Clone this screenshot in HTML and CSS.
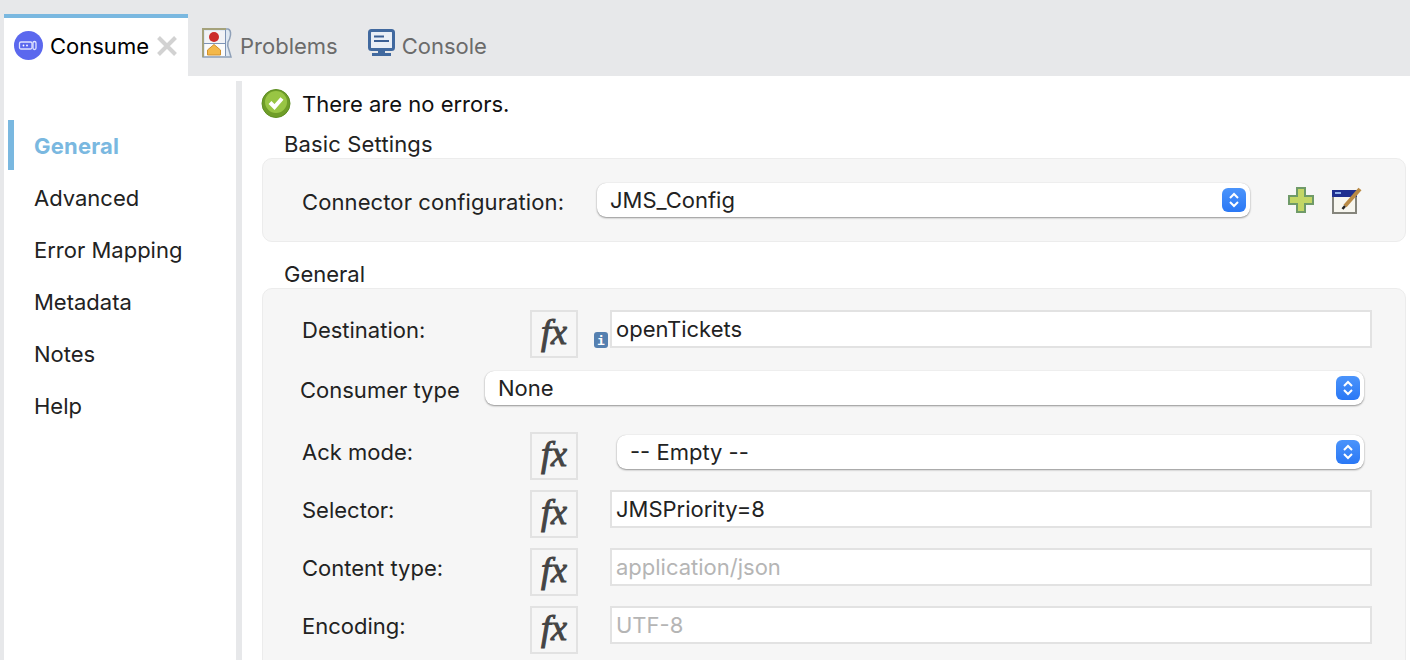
FILE: index.html
```html
<!DOCTYPE html>
<html lang="en">
  <head>
    <meta charset="UTF-8" />
    <title>Consume</title>
    <link rel="stylesheet" href="styles.css">
  </head>
  <body>
    <div class="tabbar">
      <div class="tab tab-active">
        <svg class="tab-icon" width="29" height="29" viewBox="0 0 29 29">
          <circle cx="14.5" cy="14.5" r="14.5" fill="#5b68ee"/>
          <rect x="5.500" y="11" width="12.500" height="7" rx="1.500" fill="none" stroke="#dfe2ff" stroke-width="1.300"/>
          <circle cx="9.500" cy="14.500" r="0.900" fill="#fff"/>
          <circle cx="13" cy="14.500" r="0.900" fill="#fff"/>
          <rect x="19" y="10.500" width="3" height="8" rx="1.500" fill="none" stroke="#dfe2ff" stroke-width="1.300"/>
        </svg>
        <span class="tab-label">Consume</span>
        <svg class="tab-close" width="20" height="20" viewBox="0 0 20 20">
          <path d="M1.500 1.500 18.500 18.500M18.500 1.500 1.500 18.500" stroke="#d2d2d2" stroke-width="4"/>
        </svg>
      </div>
      <div class="tab">
        <svg class="tab-icon-map" width="30" height="30" viewBox="0 0 30 30">
          <path d="M1 1H26Q29 2 28.500 7Q28 11 26 14Q25 18 27 22L29 29H1Z" fill="#dfe8f2" stroke="#8fa0b8" stroke-width="1.500"/>
          <path d="M1 29V1H24" fill="none" stroke="#a5a27c" stroke-width="2"/>
          <rect x="3" y="3" width="20" height="12" fill="#f2f3f6"/>
          <rect x="3" y="16" width="20" height="12" fill="#fbfbfb"/>
          <circle cx="12" cy="9" r="5" fill="#cc2b2b"/>
          <path d="M5.500 27V22L12 16.500 18.500 22V27Z" fill="#f3b84a" stroke="#d0902c"/>
          <path d="M2 15.500H24" stroke="#7d93b5"/>
          <path d="M23.500 2V28" stroke="#7d93b5"/>
        </svg>
        <span class="tab-label">Problems</span>
      </div>
      <div class="tab tab-console">
        <svg class="tab-icon-screen" width="27" height="27" viewBox="0 0 27 27">
          <rect x="1.500" y="1.500" width="24" height="19" rx="2" fill="#e9eef6" stroke="#41699f" stroke-width="3"/>
          <path d="M6 7.500H16M6 12H21" stroke="#3b5f94" stroke-width="2"/>
          <path d="M10 22H17V24H10Z" fill="#41699f"/>
          <rect x="4" y="24" width="19" height="3" fill="#41699f"/>
        </svg>
        <span class="tab-label">Console</span>
      </div>
    </div>

    <div class="main">
      <div class="sidebar">
        <div class="nav-item nav-active">General</div>
        <div class="nav-item">Advanced</div>
        <div class="nav-item">Error Mapping</div>
        <div class="nav-item">Metadata</div>
        <div class="nav-item">Notes</div>
        <div class="nav-item">Help</div>
      </div>
      <div class="splitter"></div>
      <div class="content">
        <div class="status">
          <svg width="30" height="30" viewBox="0 0 30 30">
            <circle cx="15" cy="15.500" r="14" fill="#6f9d28" stroke="#5e8f22" stroke-width="1"/>
            <circle cx="15" cy="14" r="11" fill="#98c544"/>
            <path d="M9 14.500 13.500 19 21 10.500" fill="none" stroke="#fff" stroke-width="4"/>
          </svg>
          <span class="status-text">There are no errors.</span>
        </div>

        <div class="section-title first">Basic Settings</div>
        <div class="panel panel-basic">
          <label class="field-label config-label">Connector configuration:</label>
          <div class="select config-select">
            <span>JMS_Config</span>
            <span class="stepper">
              <svg width="14" height="18" viewBox="0 0 14 18"><path d="M3 7 7 3 11 7M3 11 7 15 11 11" fill="none" stroke="#fff" stroke-width="2"/></svg>
            </span>
          </div>
          <svg class="config-add" width="26" height="26" viewBox="0 0 26 26">
            <path d="M9 1H17V9H25V17H17V25H9V17H1V9H9Z" fill="#c3d665" stroke="#6f9a68" stroke-width="2"/>
          </svg>
          <svg class="config-edit" width="30" height="28" viewBox="0 0 30 28">
            <rect x="1" y="5" width="23" height="22" fill="#f7f6ef" stroke="#85857c" stroke-width="2"/>
            <rect x="0" y="4" width="25" height="7" fill="#1f2f8f"/>
            <path d="M3 7H9" stroke="#8fb0ea" stroke-width="2"/>
            <path d="M13 20 28 3" stroke="#b98a45" stroke-width="4"/>
            <path d="M10.500 23 13 20" stroke="#222" stroke-width="2.500"/>
          </svg>
        </div>

        <div class="section-title">General</div>
        <div class="panel panel-general">
          <div class="row">
            <label class="field-label">Destination:</label>
            <div class="fx">fx</div>
            <div class="hint"><span class="info">i</span></div>
            <input class="text-input" type="text" value="openTickets" />
          </div>
          <div class="row-consumer">
            <label class="field-label consumer-label">Consumer type</label>
            <div class="select consumer-select">
              <span>None</span>
              <span class="stepper">
                <svg width="14" height="18" viewBox="0 0 14 18"><path d="M3 7 7 3 11 7M3 11 7 15 11 11" fill="none" stroke="#fff" stroke-width="2"/></svg>
              </span>
            </div>
          </div>
          <div class="row">
            <label class="field-label">Ack mode:</label>
            <div class="fx">fx</div>
            <div class="select ack-select">
              <span>-- Empty --</span>
              <span class="stepper">
                <svg width="14" height="18" viewBox="0 0 14 18"><path d="M3 7 7 3 11 7M3 11 7 15 11 11" fill="none" stroke="#fff" stroke-width="2"/></svg>
              </span>
            </div>
          </div>
          <div class="row">
            <label class="field-label">Selector:</label>
            <div class="fx">fx</div>
            <div class="hint"></div>
            <input class="text-input" type="text" value="JMSPriority=8" />
          </div>
          <div class="row">
            <label class="field-label">Content type:</label>
            <div class="fx">fx</div>
            <div class="hint"></div>
            <input class="text-input" type="text" placeholder="application/json" />
          </div>
          <div class="row">
            <label class="field-label">Encoding:</label>
            <div class="fx">fx</div>
            <div class="hint"></div>
            <input class="text-input" type="text" placeholder="UTF-8" />
          </div>
        </div>
      </div>
    </div>
  </body>
</html>
```
FILE: styles.css
```css
html,
body {
  margin: 0;
  height: 660px;
  overflow: hidden;
}
body {
  background-color: white;
  font-family: "Inter", "Liberation Sans", sans-serif;
  font-size: 22px;
  color: #222;
}
.tabbar {
  height: 76px;
  box-sizing: border-box;
  padding: 14px 0 0 4px;
  background-color: #e7e8ea;
  display: flex;
}
.tab {
  display: flex;
  align-items: center;
  gap: 8px;
  padding: 2px 14px 0;
  color: #6b6b6b;
}
.tab-icon-map {
  margin-bottom: 6px;
}
.tab-icon-screen {
  margin-bottom: 8px;
}
.tab-console {
  gap: 7px;
  padding-left: 16px;
}
.tab-active {
  width: 184px;
  box-sizing: border-box;
  gap: 7px;
  padding: 0 10px 2px;
  border-top: 4px solid #7ab8e0;
  background-color: white;
  color: #000;
}
.tab-icon {
  margin-bottom: 1px;
}
.tab-close {
  margin-left: 1px;
}
.main {
  display: flex;
  height: 584px;
  border-left: 4px solid #e7e8ea;
}
.sidebar {
  width: 232px;
  padding-top: 44px;
}
.nav-item {
  height: 52px;
  box-sizing: border-box;
  padding-left: 30px;
  line-height: 52px;
}
.nav-active {
  height: 50px;
  margin-left: 4px;
  margin-bottom: 2px;
  padding-left: 20px;
  border-left: 6px solid #7ab8e0;
  font-weight: 700;
  letter-spacing: 0.2px;
  color: #7ab8e0;
}
.splitter {
  width: 6px;
  margin-top: 5px;
  background-color: #e7e8ea;
}
.content {
  flex: 1;
  padding: 12px 4px 0 20px;
}
.status {
  display: flex;
  align-items: center;
  gap: 11px;
  height: 30px;
  margin-left: -1px;
  color: #111;
}
.status-text {
  padding-top: 2px;
}
.section-title {
  height: 28px;
  line-height: 28px;
  margin: 18px 0 0 22px;
}
.section-title.first {
  margin-top: 12px;
  letter-spacing: 0.15px;
}
.panel {
  box-sizing: border-box;
  border: 1px solid #ececec;
  border-radius: 10px;
  background-color: #f6f6f6;
}
.panel-basic {
  height: 84px;
  display: flex;
  align-items: center;
  padding-left: 39px;
}
.config-label {
  width: 295px;
  padding-top: 4px;
  letter-spacing: 0.1px;
}
.select {
  height: 34px;
  box-sizing: border-box;
  display: flex;
  align-items: center;
  justify-content: space-between;
  padding: 0 4px 0 13px;
  border-radius: 9px;
  background-color: white;
  box-shadow: 0 1px 2px rgba(0, 0, 0, 0.4), 0 0 1px rgba(0, 0, 0, 0.15);
}
.stepper {
  width: 24px;
  height: 24px;
  border-radius: 6px;
  background: linear-gradient(#4b94fb, #2a78f5);
  display: flex;
  align-items: center;
  justify-content: center;
}
.config-select {
  width: 653px;
}
.config-add {
  margin-left: 38px;
}
.config-edit {
  margin-left: 18px;
}
.panel-general {
  height: 400px;
  padding: 21px 0 0 39px;
}
.row {
  display: flex;
  align-items: flex-start;
  height: 48px;
  margin-bottom: 10px;
}
.row .field-label {
  width: 228px;
  line-height: 40px;
}
.row .select {
  margin-top: 3px;
}
.row-consumer {
  display: flex;
  align-items: center;
  height: 34px;
  margin: 13px 0 27px -2px;
}
.consumer-label {
  width: 185px;
  padding-top: 4px;
}
.consumer-select {
  width: 879px;
}
.ack-select {
  width: 747px;
  margin-left: 39px;
}
.fx {
  width: 48px;
  height: 48px;
  box-sizing: border-box;
  border: 2px solid #e2e2e2;
  text-align: center;
  line-height: 40px;
  font-family: "Liberation Serif", serif;
  font-style: italic;
  font-size: 36px;
  -webkit-text-stroke: 1px #444;
  color: #444;
}
.hint {
  width: 32px;
  height: 38px;
  display: flex;
  justify-content: flex-end;
  align-items: flex-end;
  padding-right: 2px;
  box-sizing: border-box;
}
.info {
  width: 14px;
  height: 16px;
  border-radius: 3px;
  background-color: #5580b0;
  color: white;
  font-family: "DejaVu Sans Mono", monospace;
  font-size: 13px;
  font-weight: 700;
  line-height: 17px;
  text-align: center;
}
.text-input {
  width: 762px;
  height: 38px;
  box-sizing: border-box;
  padding: 0 4px;
  border: 2px solid #e2e2e2;
  border-radius: 0;
  outline: none;
  background-color: white;
  font-family: inherit;
  font-size: 22px;
  color: #222;
}
.text-input::placeholder {
  color: #b5b5b5;
  opacity: 1;
}
```
